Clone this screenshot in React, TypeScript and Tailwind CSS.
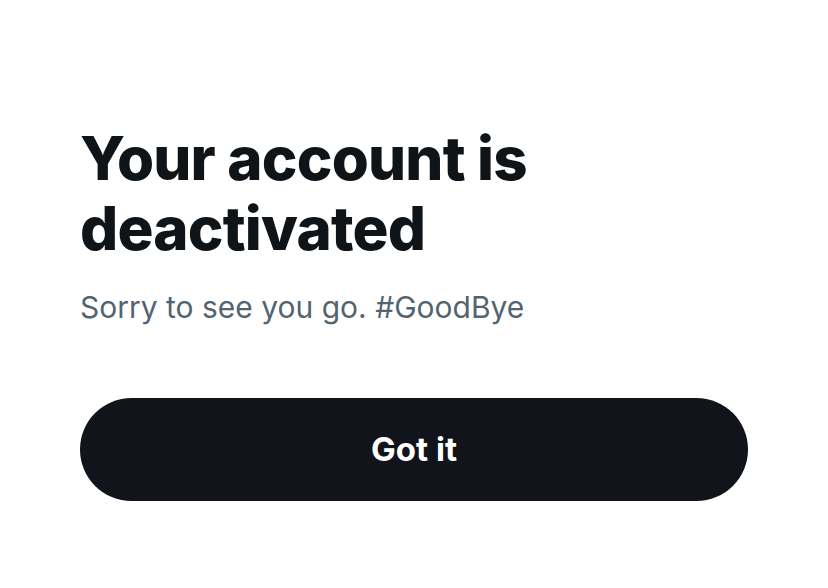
export default function App() {
  return (
    <div className="w-[828px] h-[588px] bg-white font-['Inter','Liberation_Sans',sans-serif]">
      <div className="pl-[80px] pt-[123px] w-[748px]">
        <h1 className="text-[60px] leading-[70px] font-extrabold tracking-[-0.8px] text-[#0f1419]">
          Your account is
          <br />
          deactivated
        </h1>
        <p className="mt-[24px] text-[30px] leading-[40px] text-[#536471]">
          Sorry to see you go. #GoodBye
        </p>
        <button className="mt-[71px] w-full h-[103px] rounded-full bg-[#11141a] text-white text-[33px] font-bold">
          Got it
        </button>
      </div>
    </div>
  );
}
